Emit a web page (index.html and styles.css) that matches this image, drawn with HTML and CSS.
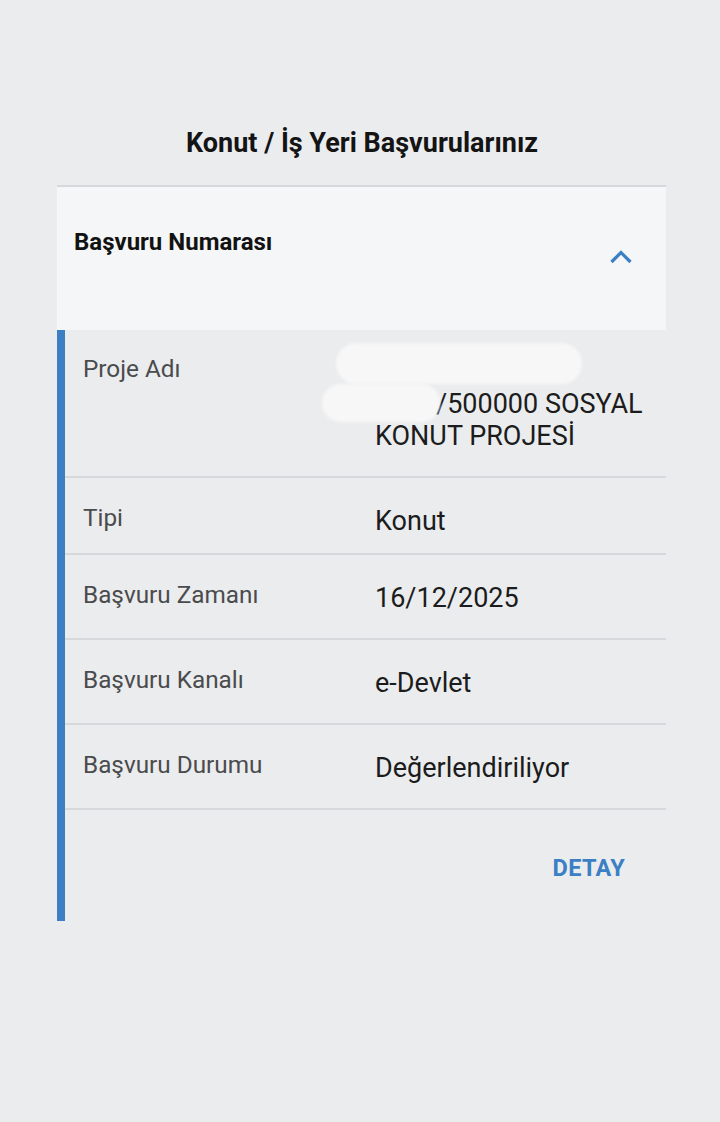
FILE: index.html
```html
<!DOCTYPE html>
<html lang="tr">
<head>
<meta charset="utf-8">
<title>Başvurular</title>
<link rel="stylesheet" href="styles.css">
</head>
<body>
<div class="page">
  <h1 class="title">Konut / İş Yeri Başvurularınız</h1>
  <div class="card">
    <div class="card-head">
      <div class="head-title">Başvuru Numarası</div>
      <svg class="chevron" width="24" height="16" viewBox="0 0 24 16"><polyline points="2.5,13 12,3.5 21.5,13" fill="none" stroke="#3b7fc4" stroke-width="3.2" stroke-linejoin="miter"/></svg>
    </div>
    <div class="card-body">
      <div class="row row-proje">
        <div class="label">Proje Adı</div>
        <div class="value value-multi">
          <span class="line"></span>
          <span class="line"><span class="gap"></span>/500000 SOSYAL</span>
          <span class="line">KONUT PROJESİ</span>
          <span class="redact redact-1"></span>
          <span class="redact redact-2"></span>
        </div>
      </div>
      <div class="row row-short">
        <div class="label">Tipi</div>
        <div class="value">Konut</div>
      </div>
      <div class="row">
        <div class="label">Başvuru Zamanı</div>
        <div class="value">16/12/2025</div>
      </div>
      <div class="row">
        <div class="label">Başvuru Kanalı</div>
        <div class="value">e-Devlet</div>
      </div>
      <div class="row">
        <div class="label">Başvuru Durumu</div>
        <div class="value">Değerlendiriliyor</div>
      </div>
      <div class="actions">
        <span class="detay">DETAY</span>
      </div>
    </div>
  </div>
</div>
</body>
</html>
```

FILE: styles.css
```css
html, body {
  margin: 0;
  padding: 0;
  background: #ebecee;
}
body {
  font-family: Roboto, "Liberation Sans", sans-serif;
  width: 720px;
  height: 1122px;
  overflow: hidden;
}
.page {
  padding-top: 126px;
}
.title {
  margin: 0 0 25px 0;
  text-align: center;
  font-size: 27px;
  line-height: 34px;
  font-weight: 700;
  color: #141414;
  padding-left: 4px;
}
.card {
  margin: 0 54px 0 57px;
}
.card-head {
  height: 143px;
  border-top: 2px solid #d6d8db;
  background: #f5f6f7;
  display: flex;
  justify-content: space-between;
  align-items: flex-start;
}
.head-title {
  margin: 41px 0 0 17px;
  font-size: 24px;
  line-height: 28px;
  font-weight: 700;
  color: #121212;
}
.chevron {
  margin: 62px 33px 0 0;
}
.card-body {
  border-left: 8px solid #3b7fc4;
}
.row {
  display: grid;
  grid-template-columns: 292px 1fr;
  padding: 24px 0 27px 18px;
  border-bottom: 2px solid #d6d8db;
}
.row-short {
  padding-bottom: 19px;
}
.row-proje {
  padding: 26px 0 24px 18px;
}
.label {
  font-size: 24.3px;
  line-height: 32px;
  color: #4a4b4d;
}
.row-proje .label {
  margin-top: -3px;
}
.value {
  font-size: 27px;
  line-height: 32px;
  color: #1c1c1c;
  padding-top: 3px;
  margin-bottom: -3px;
  white-space: nowrap;
}
.value-multi {
  position: relative;
  padding-top: 0;
  margin-bottom: 0;
}
.line {
  display: block;
  height: 32px;
}
.gap {
  display: inline-block;
  width: 61px;
}
.redact {
  position: absolute;
  background: #f7f7f7;
  border-radius: 21px;
  filter: blur(1.5px);
}
.redact-1 {
  left: -39px;
  top: -13px;
  width: 246px;
  height: 41px;
}
.redact-2 {
  left: -53px;
  top: 28px;
  width: 118px;
  height: 38px;
}
.actions {
  height: 111px;
  display: flex;
  justify-content: flex-end;
  align-items: center;
  padding-right: 41px;
}
.detay {
  font-size: 23.5px;
  font-weight: 700;
  color: #3b7fc4;
  letter-spacing: 0.3px;
  margin-top: 4px;
}
```
